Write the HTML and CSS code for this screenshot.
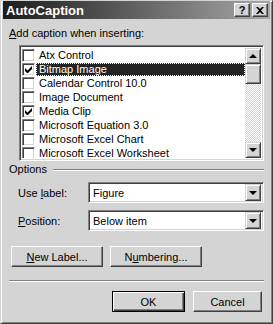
FILE: index.html
```html
<!DOCTYPE html>
<html lang="en">
<head>
    <meta charset="UTF-8">
    <title>AutoCaption</title>
    <link rel="stylesheet" href="styles.css">
</head>
<body>
    <div class="window">
        <div class="titlebar">
            <span class="title">AutoCaption</span>
            <div class="title-buttons">
                <span class="tbtn">?</span>
                <span class="tbtn close">
                    <svg width="8" height="7" viewBox="0 0 8 7"><path d="M0 0h2l2 2 2-2h2L5 3.5 8 7H6L4 5 2 7H0l3-3.5z" fill="#000"/></svg>
                </span>
            </div>
        </div>

        <div class="content">
            <div class="label"><u>A</u>dd caption when inserting:</div>
            <div class="listbox">
                <div class="items">
                    <div class="item"><span class="check"></span><span class="text">Atx Control</span></div>
                    <div class="item selected"><span class="check on"><svg width="7" height="7" viewBox="0 0 7 7"><path d="M0 2v3l2 2h1l4-4V0L2.5 4.5z" fill="#000"/></svg></span><span class="text">Bitmap Image</span></div>
                    <div class="item"><span class="check"></span><span class="text">Calendar Control 10.0</span></div>
                    <div class="item"><span class="check"></span><span class="text">Image Document</span></div>
                    <div class="item"><span class="check on"><svg width="7" height="7" viewBox="0 0 7 7"><path d="M0 2v3l2 2h1l4-4V0L2.5 4.5z" fill="#000"/></svg></span><span class="text">Media Clip</span></div>
                    <div class="item"><span class="check"></span><span class="text">Microsoft Equation 3.0</span></div>
                    <div class="item"><span class="check"></span><span class="text">Microsoft Excel Chart</span></div>
                    <div class="item"><span class="check"></span><span class="text">Microsoft Excel Worksheet</span></div>
                </div>
                <div class="scrollbar">
                    <span class="sbtn"><span class="arrow-up"></span></span>
                    <div class="track"><span class="thumb"></span></div>
                    <span class="sbtn"><span class="arrow-down"></span></span>
                </div>
            </div>

            <div class="group-head"><span>Options</span><span class="groove"></span></div>

            <div class="field">
                <span class="field-label">Use <u>l</u>abel:</span>
                <div class="combo"><span class="value">Figure</span><span class="sbtn"><span class="arrow-down"></span></span></div>
            </div>
            <div class="field">
                <span class="field-label"><u>P</u>osition:</span>
                <div class="combo"><span class="value">Below item</span><span class="sbtn"><span class="arrow-down"></span></span></div>
            </div>

            <div class="btn-row">
                <span class="button wide"><u>N</u>ew Label...</span>
                <span class="button wide">N<u>u</u>mbering...</span>
            </div>

            <div class="separator"></div>

            <div class="footer-buttons">
                <span class="button default">OK</span>
                <span class="button">Cancel</span>
            </div>
        </div>
    </div>
</body>
</html>
```

FILE: styles.css
```css
body {
    margin: 0;
    background: #d4d4d4;
    font-family: "Liberation Sans", Arial, sans-serif;
    font-size: 11px;
    color: #000;
}
u {
    text-decoration: underline;
    text-underline-offset: 1px;
}
.window {
    width: 273px;
    height: 324px;
    box-sizing: border-box;
    background: #d4d4d4;
    border: 1px solid;
    border-color: #d4d4d4 #404040 #404040 #d4d4d4;
    box-shadow: inset 1px 1px #fff, inset -1px -1px #808080;
    padding: 0 2px 2px 2px;
}
.titlebar {
    height: 18px;
    display: flex;
    align-items: center;
    justify-content: space-between;
    background: linear-gradient(to right, #1c1c1c, #a8a8a8);
    padding: 0 2px 0 2px;
}
.title {
    color: #fff;
    font-weight: bold;
    font-size: 13px;
    padding-left: 1px;
}
.title-buttons {
    display: flex;
    gap: 2px;
}
.tbtn {
    width: 16px;
    height: 14px;
    box-sizing: border-box;
    background: #d4d4d4;
    border: 1px solid;
    border-color: #fff #404040 #404040 #fff;
    box-shadow: inset -1px -1px #808080;
    display: flex;
    align-items: center;
    justify-content: center;
    font-weight: bold;
    font-size: 11px;
    line-height: 1;
}
.content {
    padding: 0 6px 0 6px;
}
.label {
    margin-top: 8px;
    line-height: 13px;
    height: 13px;
}
.listbox {
    margin: 5px 0 0 10px;
    width: 245px;
    height: 116px;
    box-sizing: border-box;
    display: flex;
    background: #fff;
    border: 1px solid;
    border-color: #808080 #fff #fff #808080;
    box-shadow: inset 1px 1px #404040, inset -1px -1px #d4d4d4;
    padding: 2px 2px 2px 2px;
}
.items {
    flex: 1;
    overflow: hidden;
}
.item {
    height: 14px;
    display: flex;
    align-items: center;
}
.check {
    width: 13px;
    height: 13px;
    box-sizing: border-box;
    flex: none;
    background: #fff;
    border: 1px solid;
    border-color: #808080 #fff #fff #808080;
    box-shadow: inset 1px 1px #404040, inset -1px -1px #d4d4d4;
    display: flex;
    align-items: center;
    justify-content: center;
}
.text {
    margin-left: 1px;
    padding: 0 2px 0 3px;
    line-height: 13px;
    height: 13px;
    flex: 1;
}
.selected .text {
    background: #242424;
    color: #fff;
    outline: 1px dotted #fff;
    outline-offset: -1px;
}
.scrollbar {
    width: 16px;
    display: flex;
    flex-direction: column;
}
.track {
    flex: 1;
    background-color: #ececec;
    background-image: repeating-conic-gradient(#fff 0 25%, #d4d4d4 0 50%);
    background-size: 2px 2px;
}
.thumb {
    display: block;
    width: 16px;
    height: 20px;
    box-sizing: border-box;
    background: #d4d4d4;
    border: 1px solid;
    border-color: #d4d4d4 #404040 #404040 #d4d4d4;
    box-shadow: inset 1px 1px #fff, inset -1px -1px #808080;
}
.sbtn {
    width: 16px;
    height: 16px;
    flex: none;
    box-sizing: border-box;
    background: #d4d4d4;
    border: 1px solid;
    border-color: #d4d4d4 #404040 #404040 #d4d4d4;
    box-shadow: inset 1px 1px #fff, inset -1px -1px #808080;
    display: flex;
    align-items: center;
    justify-content: center;
}
.arrow-up, .arrow-down {
    width: 0;
    height: 0;
    border-left: 4px solid transparent;
    border-right: 4px solid transparent;
}
.arrow-up {
    border-bottom: 4px solid #000;
}
.arrow-down {
    border-top: 4px solid #000;
}
.group-head {
    display: flex;
    align-items: center;
    margin-top: 2px;
    height: 13px;
    line-height: 13px;
}
.groove {
    flex: 1;
    margin-left: 6px;
    height: 0;
    border-top: 1px solid #808080;
    border-bottom: 1px solid #fff;
}
.field {
    display: flex;
    align-items: center;
    margin-top: 6px;
    padding-left: 9px;
    height: 21px;
}
.field + .field {
    margin-top: 7px;
}
.field-label {
    width: 70px;
}
.combo {
    width: 176px;
    height: 21px;
    box-sizing: border-box;
    display: flex;
    align-items: center;
    background: #fff;
    border: 1px solid;
    border-color: #808080 #fff #fff #808080;
    box-shadow: inset 1px 1px #404040, inset -1px -1px #d4d4d4;
    padding: 2px;
}
.combo .value {
    flex: 1;
    padding-left: 2px;
}
.combo .sbtn {
    height: 17px;
}
.btn-row {
    display: flex;
    gap: 7px;
    margin-top: 15px;
    padding-left: 2px;
}
.button {
    height: 21px;
    width: 69px;
    box-sizing: border-box;
    display: flex;
    align-items: center;
    justify-content: center;
    background: #d4d4d4;
    border: 1px solid;
    border-color: #fff #404040 #404040 #fff;
    box-shadow: inset -1px -1px #808080;
}
.button.wide {
    width: 92px;
}
.separator {
    margin-top: 13px;
    height: 0;
    border-top: 1px solid #808080;
    border-bottom: 1px solid #fff;
}
.footer-buttons {
    display: flex;
    justify-content: flex-end;
    gap: 8px;
    margin-top: 9px;
    padding-right: 2px;
}
.button.default {
    width: 73px;
    height: 21px;
    border: 1px solid #000;
    box-shadow: inset 1px 1px #fff, inset -1px -1px #404040, inset -2px -2px #808080;
}
```
